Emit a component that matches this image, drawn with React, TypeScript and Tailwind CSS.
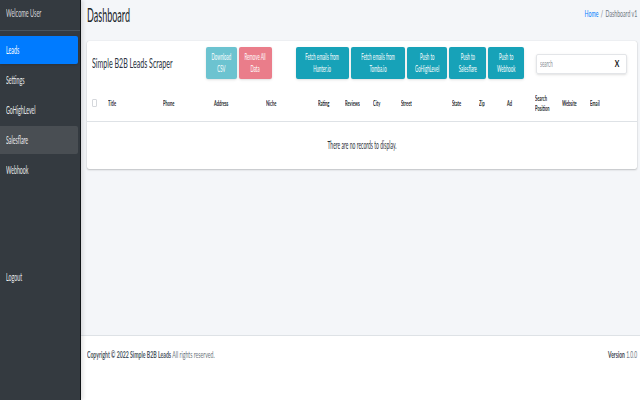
const font = { fontFamily: 'Lato, "Open Sans", "Liberation Sans", sans-serif' };

const nav = [
  { label: "Leads", cls: "bg-[#007bff] shadow-sm" },
  { label: "Settings", cls: "" },
  { label: "GoHighLevel", cls: "" },
  { label: "Salesflare", cls: "bg-[#494e53]" },
  { label: "Webhook", cls: "" },
];

const cols: React.ReactNode[] = ["Title", "Phone", "Address", "Niche", "Rating", "Reviews", "City", "Street", "State", "Zip", "Ad", <>Search<br />Position</>, "Website", "Email"];

function Btn({ w, color, children }: { w: string; color: string; children: React.ReactNode }) {
  return (
    <div className={`${w} ${color} h-[32px] rounded-[2px] flex items-center justify-center text-center text-white text-[9px] leading-[12px] shadow-sm shrink-0`}>
      <span className="block whitespace-nowrap scale-x-[0.48]">{children}</span>
    </div>
  );
}

export default function App() {
  return (
    <div style={font} className="flex w-[640px] h-[400px] overflow-hidden bg-[#f4f6f9] text-[#212529]">
      <aside className="relative z-10 w-[81px] shrink-0 bg-[#343a40] border-r border-[#111417] shadow-[2px_0_4px_rgba(0,0,0,0.12)] flex flex-col text-[#e8eaec] text-[11px]">
        <div className="h-[31px] border-b border-[#4b545c] pl-[6px] pb-[3px] flex items-center text-[#d4d7da]">
          <span className="whitespace-nowrap origin-left scale-x-[0.5]">Welcome User</span>
        </div>
        <nav className="flex flex-col gap-[2px] mt-[5px] pr-[2px]">
          {nav.map((n) => (
            <div key={n.label} className={`h-[28px] rounded-r-[2px] pl-[6px] flex items-center ${n.cls} ${n.label === "Leads" ? "text-white" : ""}`}>
              <span className="whitespace-nowrap origin-left scale-x-[0.48]">{n.label}</span>
            </div>
          ))}
        </nav>
        <div className="mt-[79px] h-[28px] pl-[6px] flex items-center">
          <span className="whitespace-nowrap origin-left scale-x-[0.48]">Logout</span>
        </div>
      </aside>

      <main className="flex-1 flex flex-col min-w-0">
        <header className="h-[41px] shrink-0 pl-[6px] pr-[3px] flex items-start justify-between">
          <h1 className="text-[19px] leading-[30px] text-[#212529] whitespace-nowrap origin-left scale-x-[0.475]">Dashboard</h1>
          <div className="text-[10px] leading-[26px] text-[#6c757d] whitespace-nowrap origin-right scale-x-[0.52]">
            <span className="text-[#007bff]">Home</span> <span className="mx-[2px]">/</span> Dashboard v1
          </div>
        </header>

        <section className="ml-[6px] mr-[3px] h-[128px] bg-white rounded-[2px] shadow-[0_0_1px_rgba(0,0,0,0.2),0_1px_2px_rgba(0,0,0,0.2)] shrink-0 flex flex-col">
          <div className="h-[44px] pt-[6px] flex items-start">
            <div className="w-[119px] shrink-0 pl-[5px] pt-[9px] text-[13px] leading-[14px] text-[#2a3340]">
              <span className="block whitespace-nowrap origin-left scale-x-[0.545]">Simple B2B Leads Scraper</span>
            </div>
            <div className="flex gap-[2px]">
              <Btn w="w-[31px]" color="bg-[#6cc3d0]">Download<br />CSV</Btn>
              <Btn w="w-[33px]" color="bg-[#ea7d8a]">Remove All<br />Data</Btn>
            </div>
            <div className="flex gap-[2px] ml-[24px]">
              <Btn w="w-[53px]" color="bg-[#17a2b8]">Fetch emails from<br />Hunter.io</Btn>
              <Btn w="w-[54px]" color="bg-[#17a2b8]">Fetch emails from<br />Tomba.io</Btn>
              <Btn w="w-[40px]" color="bg-[#17a2b8]">Push to<br />GoHighLevel</Btn>
              <Btn w="w-[37px]" color="bg-[#17a2b8]">Push to<br />Salesflare</Btn>
              <Btn w="w-[36px]" color="bg-[#17a2b8]">Push to<br />Webhook</Btn>
            </div>
            <div className="ml-[12px] mt-[7px] w-[91px] h-[20px] border border-[#e3e5e8] rounded-[2px] shadow-sm flex items-center justify-between pl-[3px] pr-[6px] shrink-0">
              <span className="text-[9px] text-[#8a9097] whitespace-nowrap origin-left scale-x-[0.5]">search</span>
              <span className="text-[9px] font-bold text-[#111] scale-x-[0.75]">X</span>
            </div>
          </div>

          <div className="h-[37px] border-b border-[#dee2e6] pl-[5px] grid grid-cols-[16px_55px_51px_52px_52px_27px_28px_28px_51px_27px_28px_28px_27px_28px_1fr] items-center text-[8px] leading-[10px] font-bold text-[#212529] shrink-0">
            <div className="w-[5px] h-[8px] border border-[#d5d8dc] rounded-[1px]" />
            {cols.map((c, i) => (
              <div key={i} className="whitespace-nowrap origin-left scale-x-[0.5]">{c}</div>
            ))}
          </div>

          <div className="flex-1 flex items-center justify-center pt-[1px] text-[10.5px] text-[#2a3038]">
            <span className="whitespace-nowrap scale-x-[0.48]">There are no records to display.</span>
          </div>
        </section>

        <div className="flex-1" />

        <footer className="h-[65px] shrink-0 bg-white border-t border-[#dee2e6] pl-[6px] pr-[3px] pt-[12px] flex items-start justify-between text-[10px] leading-[12px] text-[#6c757d]">
          <div className="whitespace-nowrap origin-left scale-x-[0.52]">
            <span className="font-bold text-[#4a5560]">Copyright © 2022 Simple B2B Leads</span> All rights reserved.
          </div>
          <div className="whitespace-nowrap origin-right scale-x-[0.5]">
            <span className="font-bold text-[#3c4650]">Version</span> 1.0.0
          </div>
        </footer>
      </main>
    </div>
  );
}
